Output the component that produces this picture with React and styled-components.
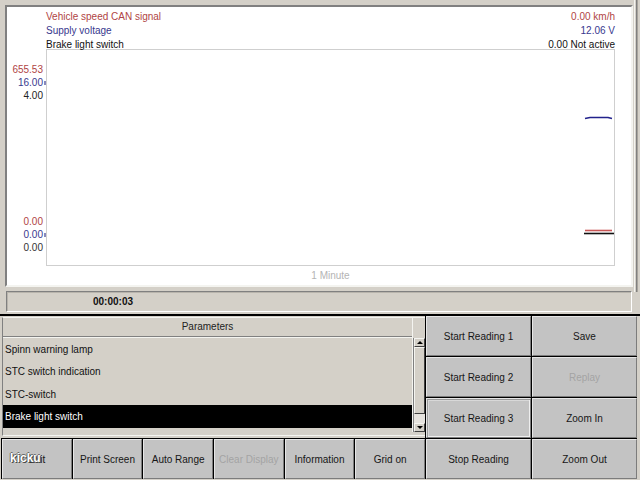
import React from 'react'
import styled, { createGlobalStyle, css } from 'styled-components'

const GlobalStyle = createGlobalStyle`
    html, body {
        margin: 0;
        padding: 0;
        background: #d4d0c8;
    }
    body {
        font-family: "Liberation Sans", Arial, sans-serif;
        font-size: 10px;
    }
`

const RED = '#b04444'
const BLUE = '#38388e'

const legend = [
    { name: 'Vehicle speed CAN signal', value: '0.00 km/h', color: RED },
    { name: 'Supply voltage', value: '12.06 V', color: BLUE },
    { name: 'Brake light switch', value: '0.00 Not active', color: '#111' },
]

const topLabels = [
    { text: '655.53', color: RED },
    { text: '16.00', color: BLUE, tick: true },
    { text: '4.00', color: '#222' },
]

const bottomLabels = [
    { text: '0.00', color: RED },
    { text: '0.00', color: BLUE, tick: true },
    { text: '0.00', color: '#333' },
]

const params = [
    'Spinn warning lamp',
    'STC switch indication',
    'STC-switch',
    'Brake light switch',
]

function App() {
    return (
        <>
            <GlobalStyle />
            <Screen>
                <TopArea>
                    <MainCol>
                        <ChartFrame>
                            <Legend>
                                {legend.map(l => (
                                    <LegendRow key={l.name} $color={l.color}>
                                        <span>{l.name}</span>
                                        <span>{l.value}</span>
                                    </LegendRow>
                                ))}
                            </Legend>
                            <PlotRow>
                                <Axis>
                                    <AxisGroup>
                                        {topLabels.map((a, i) => (
                                            <AxisLabel key={i} $color={a.color} $tick={a.tick}>
                                                {a.text}{a.tick && <Tick $color={a.color} />}
                                            </AxisLabel>
                                        ))}
                                    </AxisGroup>
                                    <AxisGroup>
                                        {bottomLabels.map((a, i) => (
                                            <AxisLabel key={i} $color={a.color} $tick={a.tick}>
                                                {a.text}{a.tick && <Tick $color={a.color} />}
                                            </AxisLabel>
                                        ))}
                                    </AxisGroup>
                                </Axis>
                                <Plot>
                                    <svg width="567" height="215" viewBox="0 0 567 215">
                                        <polyline points="538,68.5 543,67.5 561,67.5 565,68.5" fill="none" stroke="#22228c" strokeWidth="1.6" />
                                        <line x1="538" y1="180.5" x2="565" y2="180.5" stroke="#c85555" strokeWidth="1.6" />
                                        <line x1="537" y1="183.5" x2="567" y2="183.5" stroke="#111" strokeWidth="1.6" />
                                    </svg>
                                </Plot>
                            </PlotRow>
                            <Caption>1 Minute</Caption>
                        </ChartFrame>
                        <StatusBar>
                            <Clock>00:00:03</Clock>
                        </StatusBar>
                    </MainCol>
                    <RightEdge />
                </TopArea>
                <Divider />
                <Controls>
                    <ListPanel>
                        <ListView>
                            <ListBody>
                                <ListHeader>Parameters</ListHeader>
                                {params.map((p, i) => (
                                    <ListRow key={p} $selected={i === params.length - 1}>{p}</ListRow>
                                ))}
                            </ListBody>
                            <Scrollbar>
                                <ArrowBtn $dir="up" />
                                <Thumb />
                                <Track />
                                <ArrowBtn $dir="down" />
                            </Scrollbar>
                        </ListView>
                    </ListPanel>
                    <Button>Start Reading 1</Button>
                    <Button>Save</Button>
                    <Button>Start Reading 2</Button>
                    <Button $disabled>Replay</Button>
                    <Button $focused>Start Reading 3</Button>
                    <Button>Zoom In</Button>
                    <BottomRow>
                        <Button>Exit</Button>
                        <Button>Print Screen</Button>
                        <Button>Auto Range</Button>
                        <Button $disabled>Clear Display</Button>
                        <Button>Information</Button>
                        <Button>Grid on</Button>
                    </BottomRow>
                    <Button>Stop Reading</Button>
                    <Button>Zoom Out</Button>
                </Controls>
                <Watermark>kicku</Watermark>
            </Screen>
        </>
    )
}

const Screen = styled.div`
    position: relative;
    width: 640px;
    height: 480px;
    background: #d4d0c8;
    overflow: hidden;
    display: flex;
    flex-direction: column;
`

const TopArea = styled.div`
    height: 314px;
    display: flex;
`

const MainCol = styled.div`
    width: 633px;
    display: flex;
    flex-direction: column;
`

const RightEdge = styled.div`
    width: 7px;
    height: 292px;
    background: linear-gradient(to right, #d4d0c8 0 1px, #f4f4f0 1px 2px, #d4d0c8 2px 3px, #808080 3px 4px, #a8a49c 4px 5px, #d4d0c8 5px);
`

const ChartFrame = styled.div`
    margin: 5px 0 0 5px;
    height: 282px;
    box-sizing: border-box;
    border: 2px solid;
    border-color: #808080 #f4f4f0 #f4f4f0 #808080;
    background: #fff;
    display: flex;
    flex-direction: column;
    padding-top: 3px;
`

const Legend = styled.div`
    display: flex;
    flex-direction: column;
    padding: 0 16px 0 39px;
    margin-bottom: -3px;
    position: relative;
    z-index: 1;
`

const LegendRow = styled.div`
    height: 14px;
    line-height: 14px;
    display: flex;
    justify-content: space-between;
    color: ${p => p.$color};
    white-space: nowrap;
`

const PlotRow = styled.div`
    height: 217px;
    display: flex;
    padding-right: 16px;
`

const Axis = styled.div`
    width: 39px;
    box-sizing: border-box;
    padding: 14px 0 12px 0;
    display: flex;
    flex-direction: column;
    justify-content: space-between;
`

const AxisGroup = styled.div`
    display: flex;
    flex-direction: column;
`

const AxisLabel = styled.div`
    height: 13px;
    line-height: 13px;
    text-align: right;
    padding-right: ${p => (p.$tick ? '0' : '3px')};
    color: ${p => p.$color};
    white-space: nowrap;
`

const Tick = styled.span`
    display: inline-block;
    width: 2px;
    height: 4px;
    margin-left: 1px;
    vertical-align: middle;
    background: ${p => p.$color};
    opacity: 0.6;
`

const Plot = styled.div`
    flex: 1;
    border: 1px solid #cfcfcf;
    position: relative;
    z-index: 0;
    svg {
        display: block;
    }
`

const Caption = styled.div`
    height: 19px;
    line-height: 19px;
    text-align: center;
    color: #b4b4b4;
    padding: 0 16px 0 39px;
`

const StatusBar = styled.div`
    margin: 4px 1px 0 6px;
    height: 21px;
    box-sizing: border-box;
    border: 1px solid;
    border-color: #808080 #fff #fff #808080;
    box-shadow: inset 1px 1px 0 #b8b4ac;
    display: flex;
    align-items: center;
    padding-left: 86px;
`

const Clock = styled.span`
    font-weight: bold;
    font-size: 10px;
    color: #111;
`

const Divider = styled.div`
    height: 2px;
    background: #000;
`

const Controls = styled.div`
    margin-left: 1px;
    width: 636px;
    display: grid;
    grid-template-columns: 424px 105px 105px;
    grid-template-rows: repeat(4, 40px);
    gap: 1px;
    background: #000;
`

const ListPanel = styled.div`
    grid-column: 1;
    grid-row: 1 / 4;
    background: #d4d0c8;
    padding: 1px 0 2px 1px;
    display: flex;
`

const ListView = styled.div`
    flex: 1;
    display: flex;
    border-left: 1px solid #808080;
    border-top: 1px solid #f4f4f0;
    border-bottom: 1px solid #f4f4f0;
    padding-bottom: 3px;
`

const ListBody = styled.div`
    flex: 1;
    display: flex;
    flex-direction: column;
    border-right: 1px solid #f4f4f0;
`

const ListHeader = styled.div`
    height: 18px;
    line-height: 18px;
    text-align: center;
    color: #222;
    border-bottom: 1px solid #808080;
    box-shadow: 0 1px 0 #f4f4f0;
    margin-bottom: 1px;
`

const ListRow = styled.div`
    height: 22.4px;
    line-height: 23px;
    padding-left: 2px;
    color: #111;
    ${p => p.$selected && css`
        background: #000;
        color: #fff;
    `}
`

const Scrollbar = styled.div`
    width: 11px;
    margin-top: 20px;
    display: flex;
    flex-direction: column;
    border-left: 1px solid #808080;
`

const bevel = css`
    box-sizing: border-box;
    background: #d4d0c8;
    border: 1px solid;
    border-color: #f4f4f0 #404040 #404040 #f4f4f0;
`

const ArrowBtn = styled.div`
    ${bevel};
    height: 9px;
    display: flex;
    align-items: center;
    justify-content: center;
    &::after {
        content: '';
        border-left: 3px solid transparent;
        border-right: 3px solid transparent;
        ${p => (p.$dir === 'up'
            ? css`border-bottom: 3px solid #000;`
            : css`border-top: 3px solid #000;`)}
    }
`

const Thumb = styled.div`
    ${bevel};
    height: 67px;
`

const Track = styled.div`
    flex: 1;
    background: #e6e3de;
`

const BottomRow = styled.div`
    grid-column: 1;
    grid-row: 4;
    display: grid;
    grid-template-columns: repeat(6, 1fr);
    gap: 1px;
    padding-left: 1px;
    background: #000;
`

const Button = styled.div`
    box-sizing: border-box;
    background: #c3c3c3;
    border: 1px solid;
    border-color: #e6e6e6 #7c7c7c #7c7c7c #e6e6e6;
    display: flex;
    align-items: center;
    justify-content: center;
    color: ${p => (p.$disabled ? '#a4a4a4' : '#161616')};
    white-space: nowrap;
    ${p => p.$focused && css`
        box-shadow: inset 1px 1px 0 #9a9a9a, inset -1px -1px 0 #eeeeee, inset 2px 2px 0 #d8d8d8;
    `}
`

const Watermark = styled.div`
    position: absolute;
    left: 10px;
    top: 451px;
    font-family: "Liberation Sans", Arial, sans-serif;
    font-weight: bold;
    font-size: 12px;
    color: #fff;
    text-shadow: 1px 1px 0 #4a4a4a, -1px 0 0 #6a6a6a, 0 -1px 0 #6a6a6a;
    pointer-events: none;
`

export default App
